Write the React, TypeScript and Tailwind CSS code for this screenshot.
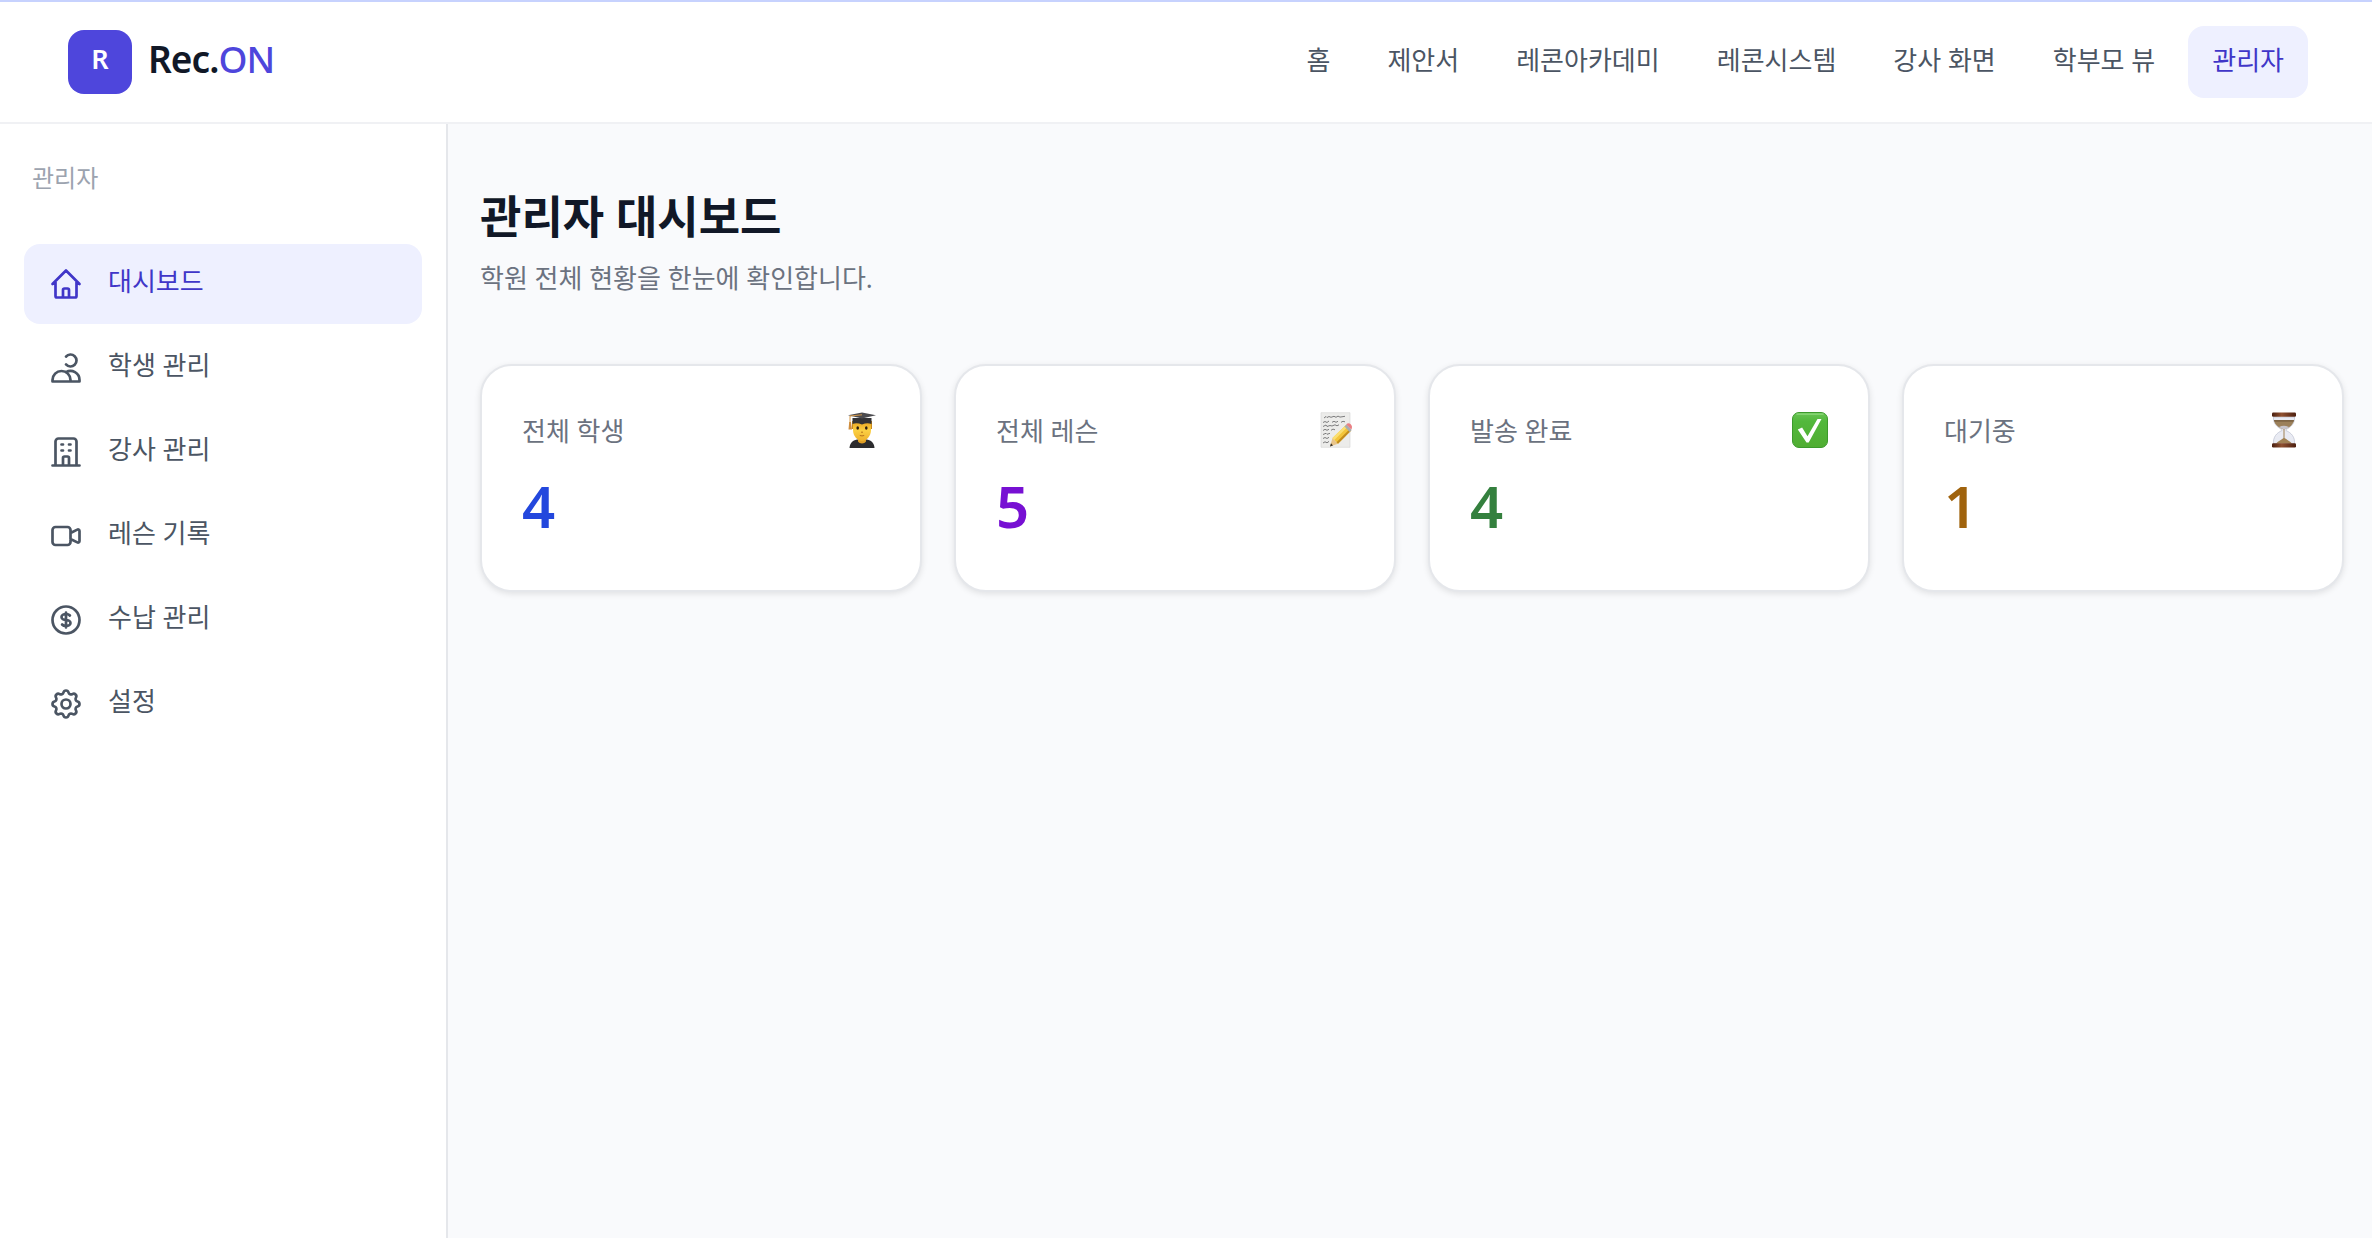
import type { ReactNode } from 'react';

const navLinks = ['홈', '제안서', '레콘아카데미', '레콘시스템', '강사 화면', '학부모 뷰', '관리자'];

const menu = [
  {
    label: '대시보드',
    d: 'M3 12l2-2m0 0l7-7 7 7M5 10v10a1 1 0 001 1h3m10-11l2 2m-2-2v10a1 1 0 01-1 1h-3m-6 0a1 1 0 001-1v-4a1 1 0 011-1h2a1 1 0 011 1v4a1 1 0 001 1m-6 0h6',
  },
  {
    label: '학생 관리',
    d: 'M12 4.354a4 4 0 110 5.292M15 21H3v-1a6 6 0 0112 0v1zm0 0h6v-1a6 6 0 00-9-5.197',
  },
  {
    label: '강사 관리',
    d: 'M19 21V5a2 2 0 00-2-2H7a2 2 0 00-2 2v16m14 0h2m-2 0h-5m-9 0H3m2 0h5M9 7h1m-1 4h1m4-4h1m-1 4h1m-5 10v-5a1 1 0 011-1h2a1 1 0 011 1v5m-4 0h4',
  },
  {
    label: '레슨 기록',
    d: 'M15 10l4.553-2.276A1 1 0 0121 8.618v6.764a1 1 0 01-1.447.894L15 14M5 18h8a2 2 0 002-2V8a2 2 0 00-2-2H5a2 2 0 00-2 2v8a2 2 0 002 2z',
  },
  {
    label: '수납 관리',
    d: 'M12 8c-1.657 0-3 .895-3 2s1.343 2 3 2 3 .895 3 2-1.343 2-3 2m0-8c1.11 0 2.08.402 2.599 1M12 8V7m0 1v8m0 0v1m0-1c-1.11 0-2.08-.402-2.599-1M21 12a9 9 0 11-18 0 9 9 0 0118 0z',
  },
  {
    label: '설정',
    d: 'M10.325 4.317c.426-1.756 2.924-1.756 3.35 0a1.724 1.724 0 002.573 1.066c1.543-.94 3.31.826 2.37 2.37a1.724 1.724 0 001.065 2.572c1.756.426 1.756 2.924 0 3.35a1.724 1.724 0 00-1.066 2.573c.94 1.543-.826 3.31-2.37 2.37a1.724 1.724 0 00-2.572 1.065c-.426 1.756-2.924 1.756-3.35 0a1.724 1.724 0 00-2.573-1.066c-1.543.94-3.31-.826-2.37-2.37a1.724 1.724 0 00-1.065-2.572c-1.756-.426-1.756-2.924 0-3.35a1.724 1.724 0 001.066-2.573c-.94-1.543.826-3.31 2.37-2.37.996.608 2.296.07 2.572-1.065zM15 12a3 3 0 11-6 0 3 3 0 016 0z',
  },
];

function Student() {
  return (
    <svg viewBox="0 0 36 36" className="size-9" aria-hidden="true">
      <defs>
        <linearGradient id="face" x1="0" y1="0" x2="0" y2="1">
          <stop offset="0" stopColor="#e9a521" />
          <stop offset="0.45" stopColor="#fbd043" />
          <stop offset="1" stopColor="#eeb02c" />
        </linearGradient>
      </defs>
      <path d="M5.5 36c.3-5 3-7.500 7.500-8.500h10c4.500 1 7.200 3.500 7.500 8.500z" fill="#2c2c2e" />
      <path d="M14 26h8v3.500c-1.500 2.500-6.500 2.500-8 0z" fill="#e09f25" />
      <path d="M8 9h20v8H8z" fill="#c98a1c" />
      <path d="M9 10h18v8c0 6-4.500 11-9 11s-9-5-9-11z" fill="url(#face)" />
      <path d="M8.500 6h19v6c-3-1.200-6-1-9.500.5C14.500 11 11.500 10.800 8.500 12z" fill="#333336" />
      <path d="M4 3.200 18 .5l14 2.700L18 6.500z" fill="#4b4b4f" />
      <path d="M18 2.800 6 4v7" fill="none" stroke="#d79a4a" strokeWidth="1" />
      <path d="M5.200 10h1.800l1 7.500H4.500z" fill="#cf8d3d" />
      <ellipse cx="13.700" cy="16" rx="1.300" ry="1.700" fill="#2a1c10" />
      <ellipse cx="22.300" cy="16" rx="1.300" ry="1.700" fill="#2a1c10" />
      <path d="M17 20.200h2M15.800 23.500q2.200.8 4.400 0" fill="none" stroke="#b06a18" strokeWidth="0.900" />
    </svg>
  );
}

function Memo() {
  return (
    <svg viewBox="0 0 36 36" className="size-9" aria-hidden="true">
      <path d="M3 .7h29v34.600H3z" fill="#ececea" stroke="#d5d5d3" strokeWidth="0.600" />
      <g fill="none" stroke="#6f6f70" strokeWidth="0.900">
        <path d="M6 6l2-1.500 1 1 2-1 2 .8 3-1 2 1 2-1.200 2 1 5-.8" />
        <path d="M5 10.500l2-1 2 1 2-1.500m3 1.300l2-1 2 1 2-1m3 1l2-1 2 .5" />
        <path d="M5 14.500l3-1.500 1 1.500 3-1 2 .5 3-1.200 2 1 2-1" />
        <path d="M5 18.500l2-1.200 2 1 2-1m2 1l2-1.200 2 .7" />
        <path d="M5 22.500l3-1.200 1 1 3-1M5 26.500l2-1 2 1 2-1.200M5 31l2-1.200 2 1 2-1.400" />
      </g>
      <path d="M12 34.500 14.500 26l5.500 5.800z" fill="#e8c48a" />
      <path d="M12 34.500l1-3.300 2 2.200z" fill="#39312a" />
      <path d="M14.500 26 28 13l5.200 5.500L20 31.800z" fill="#f3c53a" />
      <path d="M14.500 26 28 13l1.800 1.800L16.300 28z" fill="#fadf72" />
      <path d="M18.500 30.200 31.800 17l1.400 1.500L20 31.800z" fill="#c28c1d" />
      <path d="M26.500 14.400l2-1.900 5.200 5.400-2 2z" fill="#a7adb0" />
      <path d="M28.200 12.500c1.200-1.500 3-1.700 4.500-.3s1.700 3.700.6 5.400z" fill="#ea7f83" />
    </svg>
  );
}

function Check() {
  return (
    <svg viewBox="0 0 36 36" className="size-9" aria-hidden="true">
      <defs>
        <linearGradient id="tile" x1="0" y1="0" x2="0" y2="1">
          <stop offset="0" stopColor="#69c455" />
          <stop offset="0.250" stopColor="#52b83c" />
          <stop offset="1" stopColor="#50ad32" />
        </linearGradient>
      </defs>
      <rect x="0.500" y="0.500" width="35" height="35" rx="6.500" fill="url(#tile)" stroke="#3c9a2c" />
      <path d="M5 2.200h26" stroke="#8ed97c" strokeWidth="1.300" strokeLinecap="round" />
      <path d="M5.800 17.500l4.300-2 5.400 8.700L25.500 7h4L16.700 30.500h-2.200z" fill="#fff" />
    </svg>
  );
}

function Hourglass() {
  return (
    <svg viewBox="0 0 36 36" className="size-9" aria-hidden="true">
      <defs>
        <linearGradient id="wood" x1="0" y1="0" x2="1" y2="0">
          <stop offset="0" stopColor="#4a2010" />
          <stop offset="0.400" stopColor="#8f5030" />
          <stop offset="1" stopColor="#4d2010" />
        </linearGradient>
      </defs>
      <path d="M7.500 5h21c.5 6-3 10-8.500 12.500v1C25.500 21 29 25 28.500 31.500h-21C7 25 10.500 21 16 18.500v-1C10.500 15 7 11 7.500 5z" fill="#e9ebf3" stroke="#bcc0d0" strokeWidth="0.700" />
      <path d="M8 8h20c-.6 4.500-4.500 8-10 9.300C12.500 16 8.600 12.500 8 8z" fill="#9b805a" />
      <path d="M8 8h20l-.6 1.800H8.600z" fill="#7e6545" />
      <path d="M13 15q5-2.500 10 0-2.500 1.800-5 2.300-2.500-.5-5-2.300z" fill="#c9c6cd" />
      <path d="M17.500 17h1v9c2 1.500 5 3 7.500 5.500H10c2.500-2.500 5.500-4 7.500-5.500z" fill="#a08154" />
      <rect x="6" y="0.500" width="24" height="4.300" rx="1.200" fill="url(#wood)" />
      <rect x="6" y="31.200" width="24" height="4.300" rx="1.200" fill="url(#wood)" />
    </svg>
  );
}

const stats: { label: string; value: number; color: string; icon: ReactNode }[] = [
  { label: '전체 학생', value: 4, color: 'text-[#2347dd]', icon: <Student /> },
  { label: '전체 레슨', value: 5, color: 'text-[#7710d3]', icon: <Memo /> },
  { label: '발송 완료', value: 4, color: 'text-[#34803e]', icon: <Check /> },
  { label: '대기중', value: 1, color: 'text-[#a0630d]', icon: <Hourglass /> },
];

export default function App() {
  return (
    <div className="flex min-h-screen flex-col bg-[#f9fafc] font-['Noto_Sans','Noto_Sans_CJK_KR',sans-serif] text-[#111827]">
      <header className="flex items-center justify-between border-t-2 border-b-2 border-t-[#c7d2fe] border-b-[#f0f1f4] bg-white py-6 pr-16 pl-17">
        <a href="#" className="flex items-center gap-4">
          <span className="flex size-16 items-center justify-center rounded-2xl bg-[#4e46dc] pb-1.5 text-[27px] font-semibold text-white">R</span>
          <span className="pb-1.5 text-[37px] leading-[56px] font-semibold tracking-tight">
            Rec.<span className="font-medium text-[#4e46dc]">ON</span>
          </span>
        </a>
        <nav className="flex gap-[9px]">
          {navLinks.map((label) => (
            <a
              key={label}
              href="#"
              className={
                label === '관리자'
                  ? 'rounded-2xl bg-[#eef0ff] px-6 pt-4 pb-5 text-[26px] leading-9 text-[#4036c8]'
                  : 'rounded-2xl px-6 pt-4 pb-5 text-[26px] leading-9 text-[#4b5563]'
              }
            >
              {label}
            </a>
          ))}
        </nav>
      </header>
      <div className="flex flex-1">
        <aside className="w-112 shrink-0 border-r-2 border-[#e5e7eb] bg-white px-6 pt-9">
          <p className="px-2 text-[24px] leading-9 text-[#9ca3af]">관리자</p>
          <nav className="mt-12 flex flex-col gap-1">
            {menu.map((item, i) => (
              <a
                key={item.label}
                href="#"
                className={
                  i === 0
                    ? 'flex h-20 items-center gap-6 rounded-2xl bg-[#eef0ff] px-6 text-[#4036c8]'
                    : 'flex h-20 items-center gap-6 rounded-2xl px-6 text-[#4b5563]'
                }
              >
                <svg viewBox="0 0 24 24" fill="none" stroke="currentColor" strokeWidth="1.8" strokeLinecap="round" strokeLinejoin="round" className="size-9" aria-hidden="true">
                  <path d={item.d} />
                </svg>
                <span className="pb-1.5 text-[26px] leading-9">{item.label}</span>
              </a>
            ))}
          </nav>
        </aside>
        <main className="min-w-0 flex-1 pt-14 pr-7 pl-8">
          <h1 className="text-[45px] leading-[74px] font-bold">관리자 대시보드</h1>
          <p className="mt-1.5 text-[26px] leading-9 text-[#6b7280]">학원 전체 현황을 한눈에 확인합니다.</p>
          <div className="mt-17 grid grid-cols-4 gap-8">
            {stats.map((s) => (
              <section key={s.label} className="rounded-4xl border-2 border-[#e5e7eb] bg-white p-10 shadow-[0_2px_6px_rgba(0,0,0,0.1)]">
                <div className="flex h-12 items-center justify-between">
                  <h2 className="pt-0.5 text-[26px] leading-9 text-[#6b7280]">{s.label}</h2>
                  {s.icon}
                </div>
                <p className={`mt-3 mb-1 text-[58px] leading-20 font-semibold ${s.color}`}>{s.value}</p>
              </section>
            ))}
          </div>
        </main>
      </div>
    </div>
  );
}
